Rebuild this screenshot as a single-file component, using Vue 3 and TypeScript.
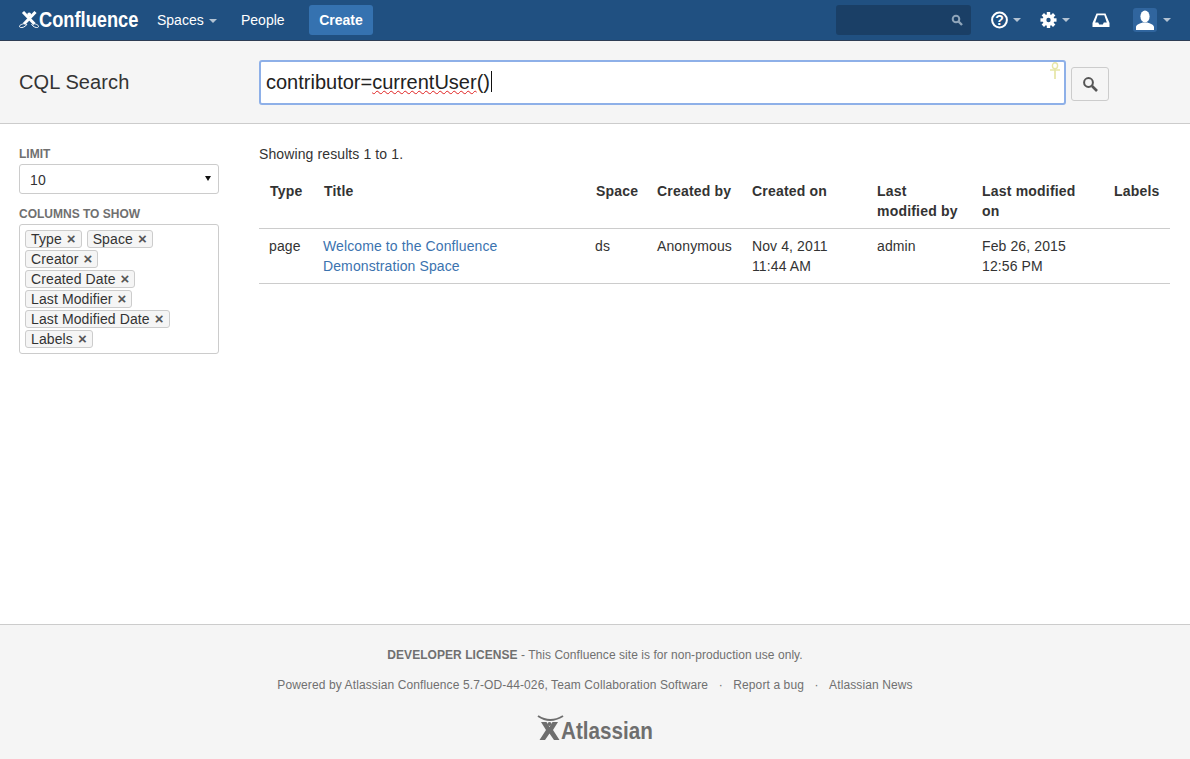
<script setup lang="ts">
const chips: string[][] = [
  ['Type', 'Space'],
  ['Creator'],
  ['Created Date'],
  ['Last Modifier'],
  ['Last Modified Date'],
  ['Labels'],
]
const heads: string[] = ['Type', 'Title', 'Space', 'Created by', 'Created on', 'Last modified by', 'Last modified on', 'Labels']
const widths: number[] = [54, 272, 61, 95, 125, 105, 132, 67]
const gearTeeth: number[] = [0, 45, 90, 135]
</script>

<template>
  <div class="page">
    <nav class="nav">
      <div class="logo">
        <svg width="20" height="18" viewBox="0 0 20 18" class="logo-mark">
          <path d="M4 1 L15.5 13 M16.5 1 L5 13" stroke="#fff" stroke-width="3" fill="none" />
          <circle cx="10.2" cy="3.4" r="1.9" fill="#fff" />
          <path d="M7 12 C4 13 .5 13.5 .5 15.5 C.5 17 4 17 6.5 15 L8 13 M13.5 12 C16 13 19.5 13.5 19.5 15.5 C19.5 17 16.5 17 14 15 L12.5 13" fill="none" stroke="#fff" stroke-width="1" />
        </svg>
        <span class="logo-text">Confluence</span>
      </div>
      <a class="nav-link spaces">Spaces <i class="caret light"></i></a>
      <a class="nav-link people">People</a>
      <button class="create">Create</button>
      <div class="spacer"></div>
      <div class="quick">
        <svg width="12" height="12" viewBox="0 0 12 12"><circle cx="5" cy="5" r="3.3" fill="none" stroke="#8fa5ba" stroke-width="2" /><path d="M7.5 7.5 L11 11" stroke="#8fa5ba" stroke-width="2.4" /></svg>
      </div>
      <div class="ic help">
        <svg width="17" height="18" viewBox="0 0 17 18"><circle cx="8.5" cy="9" r="7.4" fill="none" stroke="#fff" stroke-width="2" /><text x="8.5" y="14" text-anchor="middle" class="qm">?</text></svg>
        <i class="caret"></i>
      </div>
      <div class="ic gear">
        <svg width="17" height="18" viewBox="0 0 18 18">
          <path v-for="a in gearTeeth" :key="a" d="M9 .5 V17.5" stroke="#fff" stroke-width="3.6" :transform="`rotate(${a} 9 9)`" />
          <circle cx="9" cy="9" r="6.2" fill="#fff" />
          <circle cx="9" cy="9" r="2.3" fill="#205081" />
        </svg>
        <i class="caret"></i>
      </div>
      <div class="ic inbox">
        <svg width="18" height="14" viewBox="0 0 18 14"><path d="M4.5 .5 H13.5 L17.5 10 V14 H.5 V10 Z M5.7 2.2 L3.2 9.4 H6.2 L7.2 11.6 H10.8 L11.8 9.4 H14.8 L12.3 2.2 Z" fill="#fff" fill-rule="evenodd" /></svg>
      </div>
      <div class="ic user">
        <span class="avatar">
          <svg width="24" height="24" viewBox="0 0 24 24"><ellipse cx="12" cy="8.5" rx="4.6" ry="6" fill="#fff" /><path d="M3 22 V19 C3 16.5 7 15.5 9.5 14.5 H14.5 C17 15.5 21 16.5 21 19 V22 Z" fill="#fff" /></svg>
        </span>
        <i class="caret"></i>
      </div>
    </nav>

    <header class="band">
      <h1 class="title">CQL Search</h1>
      <div class="editor">
        <span class="q">contributor=<span class="spell">currentUser</span>()</span><span class="cursor"></span>
        <svg class="ankh" width="12" height="17" viewBox="0 0 12 17">
          <ellipse cx="6" cy="3.8" rx="2.6" ry="3" fill="none" stroke="#e6e6a6" stroke-width="1.4" />
          <path d="M1 8 H11 M6 7 V17" stroke="#e6e6a6" stroke-width="1.7" fill="none" />
        </svg>
      </div>
      <button class="go">
        <svg width="16" height="16" viewBox="0 0 16 16"><circle cx="6.5" cy="6.5" r="4.4" fill="none" stroke="#555" stroke-width="2" /><path d="M10 10 L15 15" stroke="#555" stroke-width="2.6" /></svg>
      </button>
    </header>

    <main class="main">
      <aside class="side">
        <label class="lab first">LIMIT</label>
        <div class="select">10<i class="tri"></i></div>
        <label class="lab">COLUMNS TO SHOW</label>
        <div class="chips">
          <div v-for="(row, i) in chips" :key="i" class="chip-row">
            <span v-for="c in row" :key="c" class="chip">{{ c }}<b class="x">×</b></span>
          </div>
        </div>
      </aside>
      <section class="results">
        <p class="count">Showing results 1 to 1.</p>
        <table class="tbl">
          <colgroup>
            <col v-for="(w, i) in widths" :key="i" :style="{ width: w + 'px' }" />
          </colgroup>
          <thead>
            <tr><th v-for="h in heads" :key="h">{{ h }}</th></tr>
          </thead>
          <tbody>
            <tr>
              <td>page</td>
              <td><a class="link">Welcome to the Confluence Demonstration Space</a></td>
              <td>ds</td>
              <td class="shift">Anonymous</td>
              <td class="shift">Nov 4, 2011 11:44 AM</td>
              <td class="shift">admin</td>
              <td class="shift">Feb 26, 2015 12:56 PM</td>
              <td></td>
            </tr>
          </tbody>
        </table>
      </section>
    </main>

    <footer class="foot">
      <p class="lic"><b>DEVELOPER LICENSE</b> - This Confluence site is for non-production use only.</p>
      <p class="links">
        <span>Powered by Atlassian Confluence 5.7-OD-44-026, Team Collaboration Software</span>
        <span class="dot">·</span>
        <span>Report a bug</span>
        <span class="dot">·</span>
        <span>Atlassian News</span>
      </p>
      <div class="atl">
        <svg class="atl-mark" width="23" height="26" viewBox="0 0 23 26">
          <path d="M0 1 Q12 9 25 1" fill="none" stroke="#6e6e6e" stroke-width="2" />
          <path d="M3 7 H8.5 L11.5 12 L14.5 7 H20 L15 15 L21.5 25 H16 L11.5 18.5 L7 25 H1.5 L8 15 Z" fill="#6e6e6e" />
          <circle cx="11.5" cy="9" r="2" fill="#6e6e6e" />
        </svg>
        <span class="atl-text">Atlassian</span>
      </div>
    </footer>
  </div>
</template>

<style>
html, body { margin: 0; padding: 0; }
</style>

<style scoped>
.page {
  height: 759px;
  display: flex;
  flex-direction: column;
  overflow: hidden;
  background: #fff;
  color: #333;
  font-family: "Liberation Sans", Arial, sans-serif;
  font-size: 14px;
  line-height: 20px;
  letter-spacing: 0.11px;
}
.nav {
  flex: none;
  height: 40px;
  box-sizing: content-box;
  border-bottom: 1px solid #2e3d54;
  background: #205081;
  display: flex;
  align-items: center;
  color: #fff;
  letter-spacing: 0;
}
.logo { display: flex; align-items: center; margin-left: 19px; width: 119px; }
.logo-mark { flex: none; }
.logo-text {
  display: inline-block;
  font-size: 22px;
  font-weight: 700;
  transform: scaleX(0.83);
  transform-origin: left center;
  white-space: nowrap;
}
.nav-link { color: #fff; font-size: 14px; }
.spaces { margin-left: 19px; width: 84px; }
.create {
  width: 64px;
  height: 30px;
  padding: 0;
  border: 0;
  border-radius: 3px;
  background: #3572b0;
  color: #fff;
  font: 700 14px "Liberation Sans", Arial, sans-serif;
  margin-left: 24px;
}
.people { width: 44px; }
.spacer { flex: 1; }
.caret {
  display: inline-block;
  width: 0;
  height: 0;
  border-left: 4px solid transparent;
  border-right: 4px solid transparent;
  border-top: 4px solid #b3c3d3;
  vertical-align: 2px;
}
.caret.light { margin-left: 1px; }
.quick {
  width: 135px;
  height: 30px;
  border-radius: 3px;
  background: #1a3f66;
  display: flex;
  align-items: center;
  justify-content: flex-end;
  box-sizing: border-box;
  padding-right: 8px;
}
.ic { display: flex; align-items: center; gap: 5px; }
.help { margin-left: 20px; width: 40px; }
.gear { margin-left: 9px; width: 40px; }
.inbox { margin-left: 12px; width: 18px; }
.user { margin-left: 23px; margin-right: 19px; gap: 6px; }
.qm { font: 700 14px "Liberation Sans", Arial, sans-serif; fill: #fff; }
.avatar {
  width: 24px;
  height: 24px;
  border-radius: 3px;
  background: #30659e;
  display: block;
  overflow: hidden;
}
.avatar svg { display: block; }
.band {
  flex: none;
  height: 82px;
  background: #f5f5f5;
  border-bottom: 1px solid #ccc;
  box-sizing: content-box;
  display: flex;
  align-items: flex-start;
}
.title {
  margin: 29px 0 0 19px;
  width: 240px;
  font-size: 20px;
  font-weight: 400;
  line-height: 24px;
  flex: none;
}
.editor {
  position: relative;
  margin-top: 19px;
  width: 807px;
  height: 45px;
  flex: none;
  box-sizing: border-box;
  border: 2px solid #8eb0e8;
  border-radius: 3px;
  background: #fff;
  display: flex;
  align-items: center;
  padding: 0 0 2px 5px;
  font-size: 20px;
  color: #222;
  letter-spacing: 0;
}
.spell { text-decoration: underline wavy #e02020 1px; text-underline-offset: 1px; }
.cursor { width: 1px; height: 21px; background: #111; margin-left: 1px; }
.ankh {
  position: absolute;
  top: 0;
  right: 3px;
}
.go {
  margin: 26px 0 0 5px;
  width: 38px;
  height: 34px;
  padding: 0;
  border: 1px solid #ccc;
  border-radius: 3px;
  background: #f5f5f5;
  display: flex;
  align-items: center;
  justify-content: center;
}
.main { flex: 1; display: flex; min-height: 0; }
.side { flex: none; width: 200px; margin-left: 19px; padding-top: 22px; }
.lab {
  display: block;
  font-size: 12px;
  font-weight: 700;
  color: #707070;
  line-height: 16px;
  margin-top: 12px;
  letter-spacing: 0;
}
.lab.first { margin-top: 0; }
.select {
  position: relative;
  height: 30px;
  margin-top: 2px;
  box-sizing: border-box;
  border: 1px solid #ccc;
  border-radius: 3px;
  padding: 5px 10px;
  background: #fff;
}
.tri {
  position: absolute;
  right: 7px;
  top: 11px;
  width: 0;
  height: 0;
  border-left: 3px solid transparent;
  border-right: 3px solid transparent;
  border-top: 5px solid #111;
}
.chips {
  margin-top: 2px;
  box-sizing: border-box;
  height: 130px;
  border: 1px solid #ccc;
  border-radius: 3px;
  padding: 5px 5px 0;
}
.chip-row { display: flex; gap: 5px; height: 20px; }
.chip {
  box-sizing: border-box;
  height: 18px;
  line-height: 16px;
  border: 1px solid #ccc;
  border-radius: 3px;
  background: #f5f5f5;
  padding: 0 5px;
  white-space: nowrap;
}
.x { color: #555; font-weight: 700; font-size: 15px; margin-left: 5px; }
.results { flex: none; width: 911px; margin-left: 40px; padding-top: 20px; }
.count { margin: 0 0 7px; line-height: 20px; }
.tbl { width: 911px; table-layout: fixed; border-collapse: collapse; }
.tbl th {
  text-align: left;
  vertical-align: top;
  font-weight: 700;
  letter-spacing: 0.2px;
  padding: 10px 8px 7px 11px;
  border-bottom: 1px solid #ccc;
}
.tbl td {
  vertical-align: top;
  padding: 7px 10px;
  border-bottom: 1px solid #ccc;
}
.tbl td.shift { padding-left: 11px; }
.link { color: #3b73af; }
.foot {
  flex: none;
  height: 135px;
  box-sizing: border-box;
  border-top: 1px solid #ccc;
  background: #f5f5f5;
  color: #707070;
  font-size: 12px;
  text-align: center;
}
.foot p { margin: 0; }
.lic { padding-top: 20px; letter-spacing: 0.05px; }
.links { margin-top: 10px !important; display: flex; justify-content: center; }
.dot { margin: 0 10.5px; }
.atl { display: flex; justify-content: center; align-items: flex-start; margin-top: 20px; height: 30px; letter-spacing: 0; }
.atl-mark { flex: none; overflow: visible; }
.atl-text {
  display: inline-block;
  font-size: 24px;
  font-weight: 700;
  line-height: 30px;
  color: #6e6e6e;
  width: 91px;
  margin-top: 1px;
  text-align: left;
  transform: scaleX(0.86);
  transform-origin: left center;
}
</style>
